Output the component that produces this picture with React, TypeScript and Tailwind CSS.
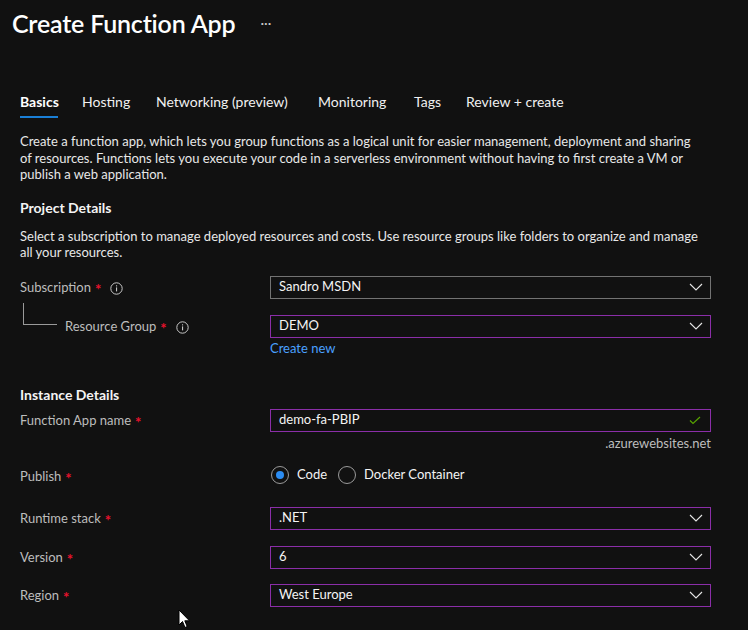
import React from 'react'

const font = { fontFamily: 'Lato, "Noto Sans", sans-serif' }

function Chevron() {
  return (
    <svg width="14" height="8" viewBox="0 0 14 8" className="shrink-0">
      <polyline points="1,1 7,7 13,1" fill="none" stroke="#e6e6e6" strokeWidth="1.1" />
    </svg>
  )
}

function InfoIcon() {
  return (
    <svg width="13" height="13" viewBox="0 0 13 13" className="shrink-0">
      <circle cx="6.5" cy="6.5" r="5.7" fill="none" stroke="#c8c8c8" strokeWidth="1" />
      <rect x="6" y="5.4" width="1.1" height="4" fill="#c8c8c8" />
      <rect x="6" y="3.3" width="1.1" height="1.1" fill="#c8c8c8" />
    </svg>
  )
}

function Req() {
  return <span className="text-[#e8112d] ml-[4px] text-[15px] leading-[13px] font-bold translate-y-[1px]">*</span>
}

function Select({ value, purple = false }: { value: string; purple?: boolean }) {
  return (
    <div
      className={`w-[441px] h-[23px] flex items-center justify-between pl-[8px] pr-[7px] border text-[13px] text-[#f4f4f4] ${
        purple ? 'border-[#8b2ea8]' : 'border-[#737373]'
      }`}
    >
      <span>{value}</span>
      <Chevron />
    </div>
  )
}

function Row({ label, children, className = '' }: { label: React.ReactNode; children: React.ReactNode; className?: string }) {
  return (
    <div className={`flex items-center ${className}`}>
      <div className="w-[250px] flex items-center text-[13px] text-[#bdbdbd] translate-y-[1px]">{label}</div>
      {children}
    </div>
  )
}

const tabs = [
  { name: 'Basics', w: 'w-[62px]', active: true },
  { name: 'Hosting', w: 'w-[74px]' },
  { name: 'Networking (preview)', w: 'w-[162px]' },
  { name: 'Monitoring', w: 'w-[96px]' },
  { name: 'Tags', w: 'w-[52px]' },
  { name: 'Review + create', w: 'w-[120px]' },
]

export default function App() {
  return (
    <div className="relative w-[748px] h-[630px] bg-[#111111] overflow-hidden text-[#e6e6e6]" style={font}>
      {/* header */}
      <div className="h-[48px] pl-[12px] flex items-center">
        <h1 className="text-[25px] font-semibold text-white tracking-[-0.2px]">Create Function App</h1>
        <span className="ml-[25px] text-[14px] text-[#c8c8c8] mb-[4px]">···</span>
      </div>

      <div className="pl-[20px] w-[711px]">
        {/* tabs */}
        <div className="mt-[40px] flex">
          {tabs.map((t) => (
            <div key={t.name} className={`${t.w} flex flex-col items-start`}>
              <div className={`h-[28px] pb-[2px] flex items-center text-[14px] ${t.active ? 'font-bold text-white' : 'text-[#f0f0f0]'}`}>
                {t.name}
              </div>
              <div className={`h-[2px] ${t.active ? 'w-[38px] bg-[#1a7fd6]' : 'w-0'}`} />
            </div>
          ))}
        </div>

        <p className="mt-[15px] text-[13px] leading-[16.5px] text-[#e8e8e8]">
          Create a function app, which lets you group functions as a logical unit for easier management, deployment and sharing
          <br />
          of resources. Functions lets you execute your code in a serverless environment without having to first create a VM or
          <br />
          publish a web application.
        </p>

        <h2 className="mt-[15px] h-[20px] flex items-center text-[14px] font-bold text-[#f4f4f4]">Project Details</h2>

        <p className="mt-[10px] text-[13px] leading-[16.5px] text-[#e8e8e8]">
          Select a subscription to manage deployed resources and costs. Use resource groups like folders to organize and manage
          <br />
          all your resources.
        </p>

        <Row
          className="mt-[15px]"
          label={
            <>
              Subscription
              <Req />
              <span className="ml-[9px] flex">
                <InfoIcon />
              </span>
            </>
          }
        >
          <Select value="Sandro MSDN" />
        </Row>

        <Row
          className="mt-[16px]"
          label={
            <>
              <div className="ml-[3px] -mt-[14px] self-start h-[22px] w-[34px] border-l border-b border-[#9a9a9a]" />
              <span className="ml-[8px]">Resource Group</span>
              <Req />
              <span className="ml-[9px] flex">
                <InfoIcon />
              </span>
            </>
          }
        >
          <Select value="DEMO" purple />
        </Row>
        <div className="pl-[250px] pt-[2px] text-[13px] leading-[16px] text-[#4aa0ff]">Create new</div>

        <h2 className="mt-[29px] h-[20px] flex items-center text-[14px] font-bold text-[#f4f4f4]">Instance Details</h2>

        <Row
          className="mt-[4px]"
          label={
            <>
              Function App name
              <Req />
            </>
          }
        >
          <div className="w-[441px] h-[23px] flex items-center justify-between pl-[8px] pr-[9px] border border-[#8b2ea8] text-[13px] text-[#f4f4f4]">
            <span>demo-fa-PBIP</span>
            <svg width="12" height="9" viewBox="0 0 12 9">
              <polyline points="1,4.5 4,7.5 11,1" fill="none" stroke="#57a300" strokeWidth="1.2" />
            </svg>
          </div>
        </Row>
        <div className="mt-[3px] text-right text-[13px] leading-[16px] text-[#bdbdbd]">.azurewebsites.net</div>

        <Row
          className="mt-[12px] h-[24px]"
          label={
            <span className="mt-[3px] flex items-center">
              Publish
              <Req />
            </span>
          }
        >
          <div className="flex items-center text-[13px] text-[#f4f4f4]">
            <span className="ml-[1px] w-[18px] h-[18px] rounded-full border border-[#9a9a9a] flex items-center justify-center">
              <span className="w-[8px] h-[8px] rounded-full bg-[#2b8cf2]" />
            </span>
            <span className="ml-[8px]">Code</span>
            <span className="ml-[11px] w-[18px] h-[18px] rounded-full border border-[#9a9a9a]" />
            <span className="ml-[8px]">Docker Container</span>
          </div>
        </Row>

        <Row
          className="mt-[20px]"
          label={
            <>
              Runtime stack
              <Req />
            </>
          }
        >
          <Select value=".NET" purple />
        </Row>

        <Row
          className="mt-[16px]"
          label={
            <>
              Version
              <Req />
            </>
          }
        >
          <Select value="6" purple />
        </Row>

        <Row
          className="mt-[15px]"
          label={
            <>
              Region
              <Req />
            </>
          }
        >
          <Select value="West Europe" purple />
        </Row>
      </div>

      {/* mouse pointer */}
      <svg className="absolute left-[178px] top-[609px]" width="13" height="20" viewBox="0 0 13 20">
        <path d="M1 1 L1 16 L4.5 12.5 L7 18.5 L9.2 17.5 L6.8 11.8 L11.5 11.8 Z" fill="#ffffff" stroke="#000000" strokeWidth="1" strokeLinejoin="round" />
      </svg>
    </div>
  )
}
